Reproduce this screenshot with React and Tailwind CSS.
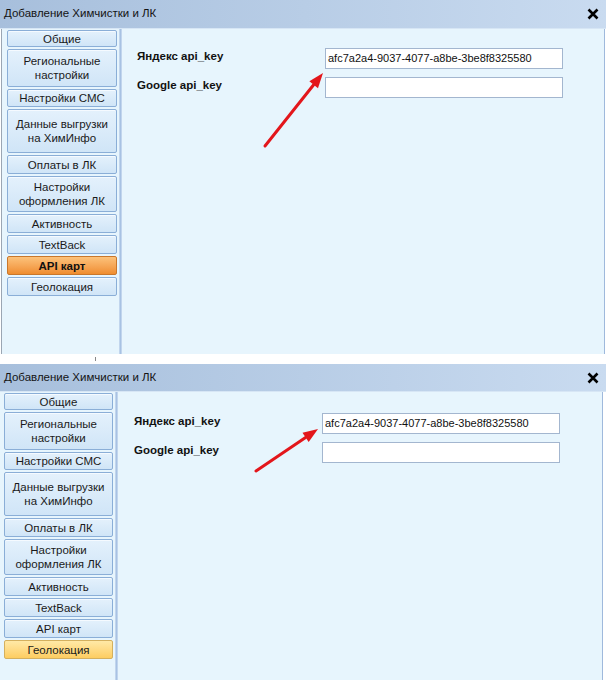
import React from 'react';

const FONT = "[font-family:'Liberation_Sans',Arial,sans-serif]";

// tab list with fixed heights, like the WinForms skin
const TABS = [
  { lines: ['Общие'], h: 17 },
  { lines: ['Региональные', 'настройки'], h: 38 },
  { lines: ['Настройки СМС'], h: 18 },
  { lines: ['Данные выгрузки', 'на ХимИнфо'], h: 44 },
  { lines: ['Оплаты в ЛК'], h: 19 },
  { lines: ['Настройки', 'оформления ЛК'], h: 36 },
  { lines: ['Активность'], h: 19 },
  { lines: ['TextBack'], h: 19 },
  { lines: ['API карт'], h: 19 },
  { lines: ['Геолокация'], h: 19 },
];

const tabStyles = {
  normal:
    'border-[#8aaed7] bg-linear-to-b from-[#e4f1fc] to-[#d0e5f7] shadow-[inset_0_1px_0_#f5faff] text-[#1a1a1a]',
  orange:
    'border-[#c9772b] bg-linear-to-b from-[#fcc27a] to-[#ef8d2e] font-bold text-[#111]',
  yellow:
    'border-[#d4b05e] bg-linear-to-b from-[#ffe9a6] to-[#fdcd60] text-[#1a1a1a]',
};

function Tab({ tab, state }) {
  return (
    <div
      style={{ height: tab.h }}
      className={`flex flex-col items-center justify-center rounded-[2px] border text-[11.5px] leading-[14px] ${tabStyles[state]}`}
    >
      {tab.lines.map((l) => (
        <span key={l}>{l}</span>
      ))}
    </div>
  );
}

function Arrow({ x1, y1, x2, y2 }) {
  const ang = Math.atan2(y2 - y1, x2 - x1);
  const len = 15;
  const half = 5.5;
  const bx = x2 - len * Math.cos(ang);
  const by = y2 - len * Math.sin(ang);
  const px = -Math.sin(ang) * half;
  const py = Math.cos(ang) * half;
  return (
    <svg className="pointer-events-none absolute left-0 top-0 h-full w-full">
      <line x1={x1} y1={y1} x2={bx} y2={by} stroke="#e3161b" strokeWidth="3" strokeLinecap="round" />
      <polygon
        points={`${x2},${y2} ${bx + px},${by + py} ${bx - px},${by - py}`}
        fill="#e3161b"
      />
    </svg>
  );
}

function CloseIcon() {
  return (
    <svg width="12" height="12" viewBox="0 0 12 12">
      <path d="M1.5 1.5 L10.5 10.5 M10.5 1.5 L1.5 10.5" stroke="#000" strokeWidth="2.6" />
    </svg>
  );
}

function Dialog({ titleH, bodyH, leftStrip, tabPad, colW, contentPad, labelPad, rightGap, selected, variant, arrow }) {
  return (
    <div className={`flex flex-col ${FONT}`}>
      <div
        style={{ height: titleH }}
        className="flex items-center justify-between bg-linear-to-r from-[#a7bfdc] to-[#c9dbf0] pl-[4px] pr-[7px] text-[11.5px] text-[#141414]"
      >
        <span>Добавление Химчистки и ЛК</span>
        <CloseIcon />
      </div>
      <div style={{ height: bodyH }} className="flex border-t border-[#d7e6f5] bg-[#e7f5fd]">
        {leftStrip && <div className="w-[2px] border-r border-[#9ba6b3] bg-white" />}
        <div style={{ paddingLeft: tabPad, width: colW }} className="flex flex-col gap-[2px] pt-[1px]">
          {TABS.map((t, i) => (
            <Tab key={i} tab={t} state={i === selected ? variant : 'normal'} />
          ))}
        </div>
        <div className="ml-[2px] w-[3px] border-x border-[#c1d5ed] bg-[#a8c2e3]" />
        <div
          style={{ paddingTop: contentPad, paddingLeft: labelPad }}
          className="relative flex flex-1 flex-col gap-[8px] border-r border-[#9fb9dc]"
        >
          {['Яндекс api_key', 'Google api_key'].map((label, i) => (
            <div key={label} className="flex items-center">
              <div className="-mt-[3px] w-[188px] text-[11.5px] font-bold text-[#111]">{label}</div>
              <div className="flex h-[21px] w-[238px] items-center border border-[#a3b6cf] bg-white pl-[2px] text-[11px] text-[#111]">
                {i === 0 ? 'afc7a2a4-9037-4077-a8be-3be8f8325580' : ''}
              </div>
            </div>
          ))}
          <Arrow {...arrow} />
        </div>
        <div style={{ width: rightGap }} className="bg-white" />
      </div>
    </div>
  );
}

export default function App() {
  return (
    <div className="h-[680px] w-[606px] overflow-hidden bg-white">
      <Dialog
        titleH={28}
        bodyH={326}
        leftStrip
        tabPad={5}
        colW={115}
        contentPad={19}
        labelPad={15}
        rightGap={1}
        selected={8}
        variant="orange"
        arrow={{ x1: 143, y1: 117, x2: 201, y2: 44 }}
      />
      <div className="relative h-[10px] bg-white">
        <div className="absolute left-[95px] top-[3px] h-[4px] w-px bg-[#888]" />
      </div>
      <Dialog
        titleH={27}
        bodyH={289}
        tabPad={4}
        colW={113}
        contentPad={21}
        labelPad={16}
        rightGap={3}
        selected={9}
        variant="yellow"
        arrow={{ x1: 138, y1: 79, x2: 200, y2: 37 }}
      />
    </div>
  );
}
